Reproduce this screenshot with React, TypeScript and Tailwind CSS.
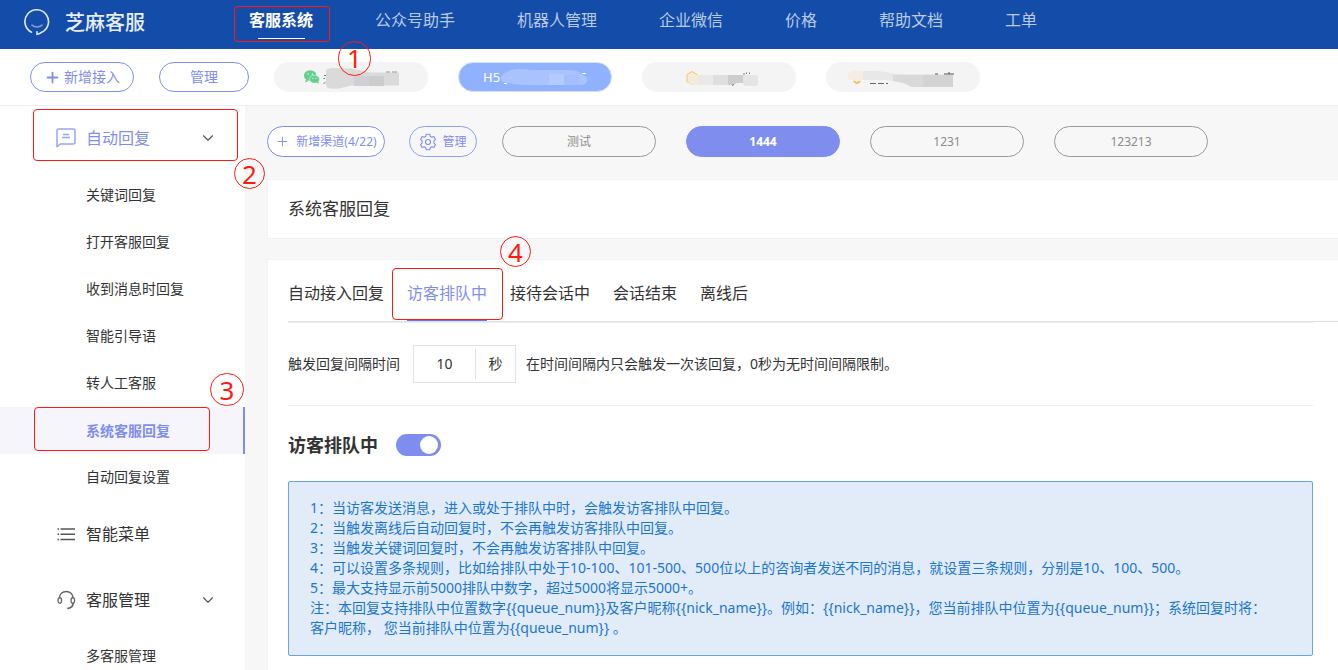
import React from "react";
import { ChevronDown, Plus } from "lucide-react";

const navItems = ["公众号助手", "机器人管理", "企业微信", "价格", "帮助文档", "工单"];
const replyItems = ["关键词回复", "打开客服回复", "收到消息时回复", "智能引导语", "转人工客服", "系统客服回复", "自动回复设置"];
const tabs = ["自动接入回复", "访客排队中", "接待会话中", "会话结束", "离线后"];
const channels = ["测试", "1444", "1231", "123213"];
const notes = [
  "1：当访客发送消息，进入或处于排队中时，会触发访客排队中回复。",
  "2：当触发离线后自动回复时，不会再触发访客排队中回复。",
  "3：当触发关键词回复时，不会再触发访客排队中回复。",
  "4：可以设置多条规则，比如给排队中处于10-100、101-500、500位以上的咨询者发送不同的消息，就设置三条规则，分别是10、100、500。",
  "5：最大支持显示前5000排队中数字，超过5000将显示5000+。",
  "注：本回复支持排队中位置数字{{queue_num}}及客户昵称{{nick_name}}。例如：{{nick_name}}，您当前排队中位置为{{queue_num}}；系统回复时将：",
  "客户昵称， 您当前排队中位置为{{queue_num}} 。",
];

function Outline({ place }: { place: string }) {
  return <span aria-hidden="true" className={`pointer-events-none absolute rounded-[4px] border border-[#ff1a0f] ${place}`} />;
}

function Step({ n, place }: { n: number; place: string }) {
  return (
    <span className={`pointer-events-none absolute z-10 flex items-center justify-center rounded-full border border-[#ff1a0f] text-[26px] leading-none font-normal text-[#ff1a0f] ${place}`}>
      {n}
    </span>
  );
}

function Logo() {
  return (
    <svg width="26" height="27" viewBox="0 0 26 27" fill="none" stroke="#dfe7f5" strokeLinecap="round" aria-hidden="true">
      <path d="M7.5 23.2A11.800 11.800 0 1 1 17 23.600Q15.500 25 13 25.300V22.800" strokeWidth="1.6" />
      <path d="M8 16.2c2.800 2.400 7.200 2.400 10 0" stroke="#7f9fd3" strokeWidth="1.7" />
    </svg>
  );
}

function ChatIcon() {
  return (
    <svg width="20" height="20" viewBox="0 0 20 20" fill="none" stroke="#98a5f5" strokeWidth="1.5" aria-hidden="true">
      <path d="M1 18.600V2.600C1 1.700 1.700 1 2.600 1h14.800c.9 0 1.600.7 1.600 1.600v11.800c0 .9-.7 1.600-1.600 1.600H4.400z" strokeLinejoin="round" />
      <path d="M7 6.500h6M6 9.500h8" />
    </svg>
  );
}

function ListIcon() {
  return (
    <svg width="20" height="20" viewBox="0 0 20 20" fill="none" stroke="#555" strokeWidth="1.5" aria-hidden="true">
      <path d="M1.500 5h1.500M4.500 5h14.500M1.500 10.200h1.500M4.500 10.200h14.500M1.500 15.500h1.500M4.500 15.500h14.500" />
    </svg>
  );
}

function HeadsetIcon() {
  return (
    <svg width="20" height="20" viewBox="0 0 20 20" fill="none" stroke="#666" strokeWidth="1.3" strokeLinecap="round" aria-hidden="true">
      <path d="M3.500 8C3.500 4.200 6.300 1.500 10.200 1.500S17 4.200 17 8" />
      <ellipse cx="3.800" cy="10.500" rx="1.800" ry="2.800" />
      <ellipse cx="16.800" cy="10.500" rx="1.800" ry="2.800" />
      <path d="M17 13.300c0 2.800-2 4.700-5 5.100" strokeWidth="1.7" />
    </svg>
  );
}

function GearIcon() {
  return (
    <svg width="18" height="18" viewBox="0 0 18 18" fill="none" stroke="currentColor" strokeWidth="1.1" strokeLinejoin="round" aria-hidden="true">
      <path d="M7.200 1.200h3.600l.4 2.100 1.500.9 2.100-.8 1.700 3-1.600 1.500v2.200l1.600 1.500-1.700 3-2.100-.8-1.500.9-.4 2.100H7.200l-.4-2.100-1.500-.9-2.100.8-1.700-3 1.600-1.500V7.900L1.500 6.400l1.700-3 2.100.8 1.500-.9z" />
      <circle cx="9" cy="9" r="2.500" />
    </svg>
  );
}

function WechatPill() {
  return (
    <button className="flex h-[30px] w-[154px] items-center rounded-full bg-[#f4f4f4] pl-[29px]" aria-label="微信接入">
      <svg width="98" height="26" viewBox="0 0 98 26" aria-hidden="true">
        <ellipse cx="7.200" cy="11.500" rx="6.300" ry="5.300" fill="#63cf8b" />
        <path d="M3 15.500l-1 3 3.500-1.500z" fill="#63cf8b" />
        <ellipse cx="11.500" cy="15.200" rx="5" ry="4" fill="#63cf8b" stroke="#f4f4f4" strokeWidth=".6" />
        <path d="M13.500 18.500l2.500 1.300-.5-2.300z" fill="#63cf8b" />
        <g fill="#f4f4f4"><circle cx="5" cy="10" r=".8" /><circle cx="9.400" cy="10" r=".8" /><circle cx="9.900" cy="14.300" r=".6" /><circle cx="13" cy="14.300" r=".6" /></g>
        <path d="M21 11.500h2M20.500 14.500h1.500M20.500 20l2-2" stroke="#777" />
        <path d="M23 7q1-3 7-3l18 .5 20 4H95q1 0 1 1v11q0 1-1 1H48l-12 3q-9 1-12-1-2-4-1-8z" fill="#dadada" />
        <path d="M51 12h15v10H51z" fill="#cfd0d3" />
        <path d="M66 12h15v10H66z" fill="#cbcccd" />
        <path d="M83 8h4M89 8h5" stroke="#999" />
      </svg>
    </button>
  );
}

function H5Pill() {
  return (
    <button className="flex h-[30px] w-[154px] items-center rounded-full border border-[#d5e1ff] bg-[#8fb1fe] pl-6 text-[13px] text-white">
      H5
      <svg width="104" height="26" viewBox="0 0 104 26" aria-hidden="true">
        <path d="M4 19.500h3M82 9.500h4" stroke="#fff" />
        <path d="M1 13q2-4 6-5 3-3 12-3 8 0 12 1h38q9 0 12 4 7 2 6 7-1 4-7 4H30Q2 21 1 15z" fill="#a8c3fd" />
        <path d="M49 10h15v11H49z" fill="#b4cbff" />
        <path d="M64 11h15v10H64z" fill="#a4bffd" />
      </svg>
    </button>
  );
}

function HexPill() {
  return (
    <button className="flex h-[30px] w-[154px] items-center rounded-full bg-[#f4f4f4] pl-[43px]" aria-label="接入三">
      <svg width="76" height="26" viewBox="0 0 76 26" aria-hidden="true">
        <path d="M7 7.500l5 3v7l-5 3-5-3v-7z" fill="#f8ebd6" stroke="#f9c272" />
        <path d="M3 12l10-1v10H8q-5-1-5-5z" fill="#f6ead8" />
        <path d="M13 11h15v10H13z" fill="#e9e9e9" />
        <path d="M28 11h15v10H28z" fill="#dfdfdf" />
        <path d="M43 11h15v8q-7-1-9 2h-6z" fill="#cecccd" />
        <path d="M58 11h13q2 0 2 2v7q0 2-2 2H60l-2-2z" fill="#e3e6e5" />
        <path d="M58 10h2M61.500 10V8.500M64.500 10V8.500M47 21.500l2-1" stroke="#777" />
      </svg>
    </button>
  );
}

function LastPill() {
  return (
    <button className="flex h-[30px] w-[154px] items-center rounded-full bg-[#f4f4f4] pl-[21px]" aria-label="接入四">
      <svg width="110" height="26" viewBox="0 0 110 26" aria-hidden="true">
        <path d="M7 17q3 4 6 0" fill="none" stroke="#f9b850" strokeWidth="2" />
        <path d="M23 19.500h6M31 19.500h6M39 19.500h2" stroke="#666" />
        <path d="M1 11q2-4 8-4h22l20 3h54v12H64q-8-5-26-6H3q-3-2-2-5z" fill="#e8e8e8" />
        <path d="M1 11q2-4 8-4h7v9H3q-3-2-2-5z" fill="#f6ede0" />
        <path d="M46 11h60v12H64q-4-4-18-6z" fill="#d9d9d9" />
        <path d="M76 11h30v12H76z" fill="#d3d3d3" />
        <path d="M97 10h10M102 8v2M88 10h3" stroke="#555" />
      </svg>
    </button>
  );
}

export default function App() {
  return (
    <div className="flex min-h-screen flex-col overflow-x-hidden bg-[#f7f7f8] font-['Noto_Sans','Noto_Sans_CJK_SC',sans-serif] text-sm text-[#333]">
      <header className="flex h-[49px] items-center bg-[#144da9] pl-6">
        <a href="#home" className="flex w-[210px] items-center gap-[15px] pb-1 text-xl font-medium text-[#e8eef8]">
          <Logo />
          芝麻客服
        </a>
        <nav className="flex gap-[62px] pb-[10px] pl-[15px] text-base text-[#b9cae5]">
          <a href="#service" className="relative font-bold whitespace-nowrap text-white">
            客服系统
            <span className="absolute top-[30px] left-[9px] h-px w-[47px] bg-white" />
            <Outline place="-top-[2px] -left-[15px] h-9 w-24" />
            <Step n={1} place="top-[33px] left-[89px] h-[35px] w-[33px]" />
          </a>
          {navItems.map((item) => (
            <a key={item} href={`#${item}`} className="whitespace-nowrap">{item}</a>
          ))}
        </nav>
      </header>

      <div className="flex h-[57px] items-center gap-[30px] border-b border-[#f0f0f4] bg-white pl-[30px]">
        <div className="flex gap-[25px]">
          <button className="flex h-[30px] w-[104px] items-center justify-center gap-[3px] rounded-full border border-[#7f8eee] text-[#7f8eee]">
            <Plus size={17} strokeWidth={2.5} />
            新增接入
          </button>
          <button className="h-[30px] w-[90px] rounded-full border border-[#7f8eee] text-[#7f8eee]">管理</button>
          <WechatPill />
        </div>
        <H5Pill />
        <HexPill />
        <LastPill />
      </div>

      <div className="flex flex-1">
        <aside className="w-[245px] shrink-0 bg-white">
          <button className="relative flex h-[66px] w-full items-center pb-[2px] pl-14 text-base text-[#7f8eee]">
            <ChatIcon />
            <span className="ml-[10px]">自动回复</span>
            <ChevronDown size={18} strokeWidth={1.5} className="mr-7 ml-auto text-[#555]" />
            <Outline place="top-[3px] left-[33px] h-[52px] w-[205px]" />
            <Step n={2} place="top-[52px] left-[234px] size-[31px]" />
          </button>
          <ul>
            {replyItems.map((item) => {
              const active = item === "系统客服回复";
              return (
                <li key={item} className="relative">
                  <a
                    href={`#${item}`}
                    className={`flex h-[47px] items-center pl-[86px] ${active ? "border-r-2 border-[#7f8eee] bg-[#f5f5fb] font-bold text-[#7f8eee]" : "pb-px"}`}
                  >
                    {item}
                  </a>
                  {active && <Outline place="top-0 left-[34px] h-11 w-44" />}
                  {active && <Step n={3} place="-top-[34px] left-[210px] h-[33px] w-[34px]" />}
                </li>
              );
            })}
          </ul>
          <button className="flex h-[66px] w-full items-center gap-[10px] pl-14 text-base">
            <ListIcon />
            智能菜单
          </button>
          <button className="flex h-[66px] w-full items-center pl-14 text-base">
            <HeadsetIcon />
            <span className="ml-[10px]">客服管理</span>
            <ChevronDown size={18} strokeWidth={1.5} className="mr-7 ml-auto text-[#555]" />
          </button>
          <a href="#multi" className="flex h-[47px] items-center pb-px pl-[86px]">多客服管理</a>
        </aside>

        <main className="min-w-0 flex-1 pl-[22px]">
          <div className="flex items-center pt-5 pb-[22px] text-xs text-[#8c8c8c]">
            <button className="flex h-[31px] w-[118px] items-center justify-center gap-[6px] rounded-full border border-[#7f8eee] bg-white text-[#7f8eee]">
              <Plus size={15} strokeWidth={1.5} />
              新增渠道(4/22)
            </button>
            <button className="ml-6 flex h-[31px] w-[68px] items-center justify-center gap-[5px] rounded-full border border-[#8ba1fb] text-[#7f8eee]">
              <GearIcon />
              管理
            </button>
            <div className="ml-[25px] flex gap-[30px]">
              {channels.map((name) => (
                <button
                  key={name}
                  className={`h-[31px] w-[154px] rounded-full border ${name === "1444" ? "border-[#7f8eee] bg-[#7f8eee] font-bold text-white" : "border-[#999]"}`}
                >
                  {name}
                </button>
              ))}
            </div>
          </div>

          <h1 className="flex h-[60px] items-center border border-r-0 border-[#f0f2f7] bg-white pl-5 text-[17px]">系统客服回复</h1>

          <section className="mt-5 border border-r-0 border-[#f0f2f7] bg-white pr-[25px] pb-6 pl-5">
            <div className="-mr-[25px] border-b border-[#e2e2e4]">
              <div role="tablist" className="flex h-[61px] gap-[23px] text-base">
                {tabs.map((tab) => {
                  const active = tab === "访客排队中";
                  return (
                    <button key={tab} role="tab" aria-selected={active} className={`relative h-full pt-1 ${active ? "text-[#7f8eee]" : ""}`}>
                      {tab}
                      {active && <span className="absolute inset-x-0 bottom-0 h-[2px] bg-[#6678ee]" />}
                      {active && <Outline place="top-2 -left-[15px] h-[52px] w-[111px]" />}
                      {active && <Step n={4} place="-top-6 left-[93px] size-[31px]" />}
                    </button>
                  );
                })}
              </div>
            </div>

            <div className="flex h-[84px] items-center gap-[10px] border-y border-[#ececec]">
              <label htmlFor="interval" className="w-[115px]">触发回复间隔时间</label>
              <div className="flex h-[38px] w-[103px] items-center border border-[#e2e3e6]">
                <input id="interval" defaultValue="10" className="w-[61px] border-0 bg-transparent text-center outline-none" />
                <span className="flex h-[30px] flex-1 items-center justify-center border-l border-[#e2e3e6]">秒</span>
              </div>
              <span>在时间间隔内只会触发一次该回复，0秒为无时间间隔限制。</span>
            </div>

            <div className="flex h-[75px] items-center gap-[18px] pt-[3px]">
              <label htmlFor="queue" className="text-lg font-bold">访客排队中</label>
              <span className="relative h-[22px] w-[45px]">
                <input
                  id="queue"
                  type="checkbox"
                  role="switch"
                  defaultChecked
                  className="peer block h-full w-full appearance-none rounded-full bg-[#ccc] checked:bg-[#7f8eee]"
                />
                <span className="pointer-events-none absolute top-[2px] left-[2px] size-[18px] rounded-full bg-white peer-checked:left-6" />
              </span>
            </div>

            <div className="rounded-[2px] border border-[#6ba3e3] bg-[#e2ecf8] pt-4 pr-4 pb-[17px] pl-[21px] leading-5 text-[#1b76d0]">
              {notes.map((line) => (
                <p key={line}>{line}</p>
              ))}
            </div>
          </section>
        </main>
      </div>
    </div>
  );
}
